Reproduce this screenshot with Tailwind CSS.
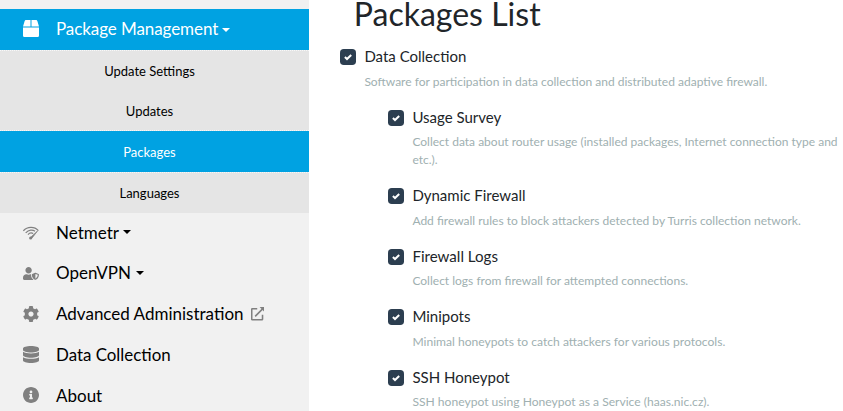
<!DOCTYPE html>
<html lang="en">
<head>
<meta charset="utf-8">
<title>Packages List</title>
<script src="https://cdn.jsdelivr.net/npm/@tailwindcss/browser@4"></script>
</head>
<body class="flex h-[411px] w-[843px] overflow-hidden bg-white font-[Lato,sans-serif] text-[15px] leading-[22px] text-[#212529]">
<svg class="hidden">
  <symbol id="check" viewBox="0 0 16 16"><rect width="16" height="16" rx="3.75" fill="#2c3e50"/><path d="M4.9 8 7 10 11.2 6" fill="none" stroke="#fff" stroke-width="2"/></symbol>
</svg>
<nav class="flex w-[309px] shrink-0 flex-col bg-[#f1f1f1] pt-[9px] text-[17px] leading-[22.5px] text-black">
  <a class="flex h-[41px] shrink-0 items-center bg-[#00a2e2] pl-[23px] text-white">
    <svg class="mb-[2px] mr-[17px] h-[17px] w-4" viewBox="0 0 512 512" preserveAspectRatio="none" fill="currentColor"><path d="M509.5 184.6L458.9 32.8C452.4 13.2 434.1 0 413.4 0H272v192h238.7c-.4-2.5-.4-5-1.2-7.4zM240 0H98.6c-20.7 0-39 13.2-45.5 32.8L2.5 184.6c-.8 2.4-.8 4.9-1.2 7.4H240V0zM0 224v240c0 26.5 21.5 48 48 48h416c26.5 0 48-21.5 48-48V224H0z"/></svg>
    <span class="tracking-[-0.08px]">Package Management</span>
    <svg class="ml-1 h-1 w-2" viewBox="0 0 8 4" fill="currentColor"><path d="M0 0h8L4 4z"/></svg>
  </a>
  <div class="flex h-[163px] shrink-0 flex-col bg-[#e5e5e5] text-center text-[13px] leading-[40px]">
    <a class="h-[41px] border-t border-dotted border-[#f8f8f8] pr-[10px]">Update Settings</a>
    <a class="h-[40px] border-b border-dotted border-[#f8f8f8] pr-[10px]">Updates</a>
    <a class="h-[41px] bg-[#00a2e2] pr-[10px] leading-[42px] text-white">Packages</a>
    <a class="h-[41px] border-t border-dotted border-[#f8f8f8] pr-[10px] leading-[41px]">Languages</a>
  </div>
  <a class="flex h-[40.75px] shrink-0 items-center pl-[23px]">
    <svg class="mr-[17px] size-4 text-[#808080]" viewBox="0 0 16 16" fill="none" stroke="currentColor"><path d="M.4 5.8C4.3 1.2 11.5 1.2 15.4 5.6M2.7 7.8C5.8 4.4 9.8 4.5 12 6.2M5 9.6C6.6 7.8 8.7 7.7 10.2 8.6" stroke-width="1.2"/><path d="M7.5 12.4 14.5 6 8.7 13.5Z" fill="currentColor" stroke-width=".7"/><circle cx="7.6" cy="13" r="1.5" fill="currentColor" stroke="none"/></svg>
    <span class="mb-px">Netmetr</span>
    <svg class="ml-1 mb-[2px] h-1 w-2" viewBox="0 0 8 4" fill="currentColor"><path d="M0 0h8L4 4z"/></svg>
  </a>
  <a class="flex h-[40.75px] shrink-0 items-center pl-[23px]">
    <svg class="mb-px mr-[17px] h-[13px] w-4 text-[#808080]" viewBox="0 0 640 512" fill="currentColor"><path d="M622.3 271.1l-115.2-45c-4.1-1.6-12.6-3.7-22.2 0l-115.2 45c-10.7 4.2-17.7 14-17.7 24.9 0 111.6 68.7 188.8 132.9 213.9 9.6 3.7 18 1.6 22.2 0C558.4 489.9 640 420.5 640 296c0-10.9-7-20.7-17.7-24.9zM496 462.4V273.3l95.5 37.3c-5.6 87.1-60.9 135.4-95.5 151.8zM224 256c70.7 0 128-57.3 128-128S294.7 0 224 0 96 57.3 96 128s57.3 128 128 128zm96 40c0-2.5.8-4.8 1.1-7.2-2.5-.1-4.9-.8-7.5-.8h-16.7c-22.2 10.2-46.9 16-72.9 16s-50.6-5.8-72.9-16h-16.7C60.2 288 0 348.2 0 422.4V464c0 26.5 21.5 48 48 48h352c6.8 0 13.3-1.5 19.2-4-54-42.9-99.2-116.7-99.2-212z"/></svg>
    <span class="mb-px">OpenVPN</span>
    <svg class="ml-[5px] mb-[2px] h-1 w-2" viewBox="0 0 8 4" fill="currentColor"><path d="M0 0h8L4 4z"/></svg>
  </a>
  <a class="flex h-[40.75px] shrink-0 items-center pl-[23px]">
    <svg class="mb-[2px] mr-[17px] size-4 text-[#808080]" viewBox="16 8 480 496" fill="currentColor"><path d="M487.4 315.7l-42.6-24.6c4.3-23.2 4.3-47 0-70.2l42.6-24.6c4.9-2.8 7.1-8.6 5.5-14-11.1-35.6-30-67.8-54.7-94.6-3.8-4.1-10-5.1-14.8-2.3L380.8 110c-17.9-15.4-38.5-27.3-60.8-35.1V25.8c0-5.6-3.9-10.5-9.4-11.7-36.7-8.2-74.3-7.8-109.2 0-5.5 1.2-9.4 6.1-9.4 11.7V75c-22.2 7.9-42.8 19.8-60.8 35.1L88.7 85.5c-4.9-2.8-11-1.9-14.8 2.3-24.7 26.7-43.6 58.9-54.7 94.6-1.7 5.4.6 11.2 5.5 14L67.3 221c-4.3 23.2-4.3 47 0 70.2l-42.6 24.6c-4.9 2.8-7.1 8.6-5.5 14 11.1 35.6 30 67.8 54.7 94.6 3.8 4.1 10 5.1 14.8 2.3l42.6-24.6c17.9 15.4 38.5 27.3 60.8 35.1v49.2c0 5.6 3.9 10.5 9.4 11.7 36.7 8.2 74.3 7.8 109.2 0 5.5-1.2 9.4-6.1 9.4-11.7v-49.2c22.2-7.9 42.8-19.8 60.8-35.1l42.6 24.6c4.9 2.8 11 1.9 14.8-2.3 24.7-26.7 43.6-58.9 54.7-94.6 1.5-5.5-.7-11.3-5.6-14.1zM256 336c-44.1 0-80-35.9-80-80s35.9-80 80-80 80 35.9 80 80-35.9 80-80 80z"/></svg>
    <span class="mb-[2px]">Advanced Administration</span>
    <svg class="mb-[2px] ml-[7px] size-[13.5px] text-[#808080]" viewBox="0 0 13 13" fill="none" stroke="currentColor" stroke-width="1.5"><path d="M6 1.7H1.2a.5.5 0 0 0-.5.5v9.6a.5.5 0 0 0 .5.5h9.4a.5.5 0 0 0 .5-.5V7.4M4 9 11.2 1.8"/><path d="M8.3 0H13v4.7z" fill="currentColor" stroke="none"/></svg>
  </a>
  <a class="flex h-[40.75px] shrink-0 items-center pl-[23px]">
    <svg class="mb-[2px] mr-[17px] h-[17px] w-4 text-[#808080]" viewBox="0 0 448 512" preserveAspectRatio="none" fill="currentColor"><path d="M448 73.143v45.714C448 159.143 347.667 192 224 192S0 159.143 0 118.857V73.143C0 32.857 100.333 0 224 0s224 32.857 224 73.143zM448 176v102.857C448 319.143 347.667 352 224 352S0 319.143 0 278.857V176c48.125 33.143 136.208 48.572 224 48.572S399.874 209.143 448 176zm0 160v102.857C448 479.143 347.667 512 224 512S0 479.143 0 438.857V336c48.125 33.143 136.208 48.572 224 48.572S399.874 369.143 448 336z"/></svg>
    <span class="text-[16.9px]">Data Collection</span>
  </a>
  <a class="flex h-[40.75px] shrink-0 items-center pl-[23px]">
    <svg class="mb-[2px] mr-[17px] size-4 text-[#808080]" viewBox="8 8 496 496" fill="currentColor"><path d="M256 8C119.043 8 8 119.083 8 256c0 136.997 111.043 248 248 248s248-111.003 248-248C504 119.083 392.957 8 256 8zm0 110c23.196 0 42 18.804 42 42s-18.804 42-42 42-42-18.804-42-42 18.804-42 42-42zm56 254c0 6.627-5.373 12-12 12h-88c-6.627 0-12-5.373-12-12v-24c0-6.627 5.373-12 12-12h12v-64h-12c-6.627 0-12-5.373-12-12v-24c0-6.627 5.373-12 12-12h64c6.627 0 12 5.373 12 12v100h12c6.627 0 12 5.373 12 12v24z"/></svg>
    <span>About</span>
  </a>
</nav>
<main class="flex min-w-0 grow flex-col pl-[31.4px]">
  <h1 class="h-[45px] shrink-0 pl-[13.4px] text-[32px] leading-[27px]">Packages List</h1>
  <div class="flex h-[60.5px] shrink-0 gap-2">
    <svg class="mt-[4px] size-4 shrink-0"><use href="#check"/></svg>
    <div><div>Data Collection</div><p class="mt-[5.5px] text-[12.03px] leading-[18px] text-[#a0b0b1]">Software for participation in data collection and distributed adaptive firewall.</p></div>
  </div>
  <div class="flex flex-col pl-12">
    <div class="flex h-[78.5px] shrink-0 gap-2">
      <svg class="mt-[4px] size-4 shrink-0"><use href="#check"/></svg>
      <div><div>Usage Survey</div><p class="mt-[5.5px] text-[12px] leading-[18px] text-[#a0b0b1]">Collect data about router usage (installed packages, Internet connection type and etc.).</p></div>
    </div>
    <div class="flex h-[60.5px] shrink-0 gap-2">
      <svg class="mt-[4px] size-4 shrink-0"><use href="#check"/></svg>
      <div><div>Dynamic Firewall</div><p class="mt-[5.5px] text-[12px] leading-[18px] text-[#a0b0b1]">Add firewall rules to block attackers detected by Turris collection network.</p></div>
    </div>
    <div class="flex h-[60.5px] shrink-0 gap-2">
      <svg class="mt-[4px] size-4 shrink-0"><use href="#check"/></svg>
      <div><div class="text-[15.1px]">Firewall Logs</div><p class="mt-[5.5px] text-[12.03px] leading-[18px] text-[#a0b0b1]">Collect logs from firewall for attempted connections.</p></div>
    </div>
    <div class="flex h-[60.5px] shrink-0 gap-2">
      <svg class="mt-[4px] size-4 shrink-0"><use href="#check"/></svg>
      <div><div>Minipots</div><p class="mt-[5.5px] text-[12.1px] leading-[18px] text-[#a0b0b1]">Minimal honeypots to catch attackers for various protocols.</p></div>
    </div>
    <div class="flex h-[60.5px] shrink-0 gap-2">
      <svg class="mt-[4px] size-4 shrink-0"><use href="#check"/></svg>
      <div><div>SSH Honeypot</div><p class="mt-[5.5px] text-[12.1px] leading-[18px] text-[#a0b0b1]">SSH honeypot using Honeypot as a Service (haas.nic.cz).</p></div>
    </div>
  </div>
</main>
</body>
</html>
